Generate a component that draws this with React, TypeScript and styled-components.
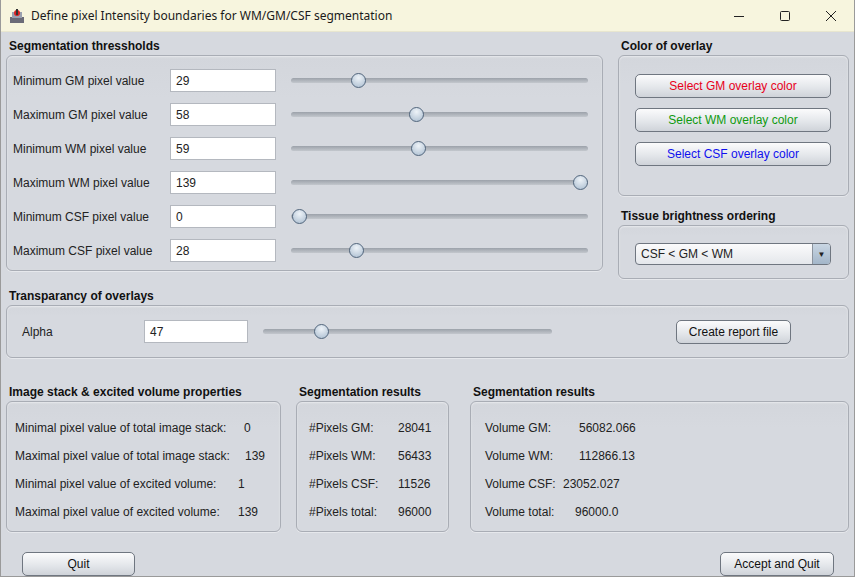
import React from "react";
import styled, { createGlobalStyle } from "styled-components";

const Global = createGlobalStyle`
  html, body { margin: 0; padding: 0; }
  body { width: 855px; height: 577px; overflow: hidden; background: #d6d9df; font-family: "Liberation Sans", Arial, sans-serif; }
`;

const Window = styled.div`
  width: 855px; height: 577px; box-sizing: border-box;
  border: 1px solid #9a9a9a; border-top: none;
  background: #d6d9df; display: flex; flex-direction: column;
`;
const TitleBar = styled.div`
  height: 31px; flex: none; display: flex; align-items: center;
  background: #f7f5de; border-bottom: 1px solid #e8e6cf;
  font-family: "Noto Sans", "Open Sans", sans-serif; font-size: 12px; color: #1a1a1a;
`;
const TitleIcon = styled.svg` margin: 0 6px 0 8px; `;
const TitleText = styled.div` flex: 1; `;
const WinBtn = styled.div`
  width: 46px; height: 31px; display: flex; align-items: center; justify-content: center;
`;
const Content = styled.div`
  flex: 1; display: flex; flex-direction: column; padding: 0 5px 0 5px;
  color: #222; font-size: 12px;
`;
const Row = styled.div<{ $gap?: number }>` display: flex; gap: ${p => p.$gap ?? 0}px; `;
const Section = styled.div<{ $w?: number; $top?: number; $ml?: number }>`
  display: flex; flex-direction: column; ${p => (p.$w ? `width:${p.$w}px;` : "flex:1;")}
  margin-top: ${p => p.$top ?? 6}px; margin-left: ${p => p.$ml ?? 0}px;
`;
const Header = styled.div`
  font-weight: bold; font-size: 12px; height: 17px; line-height: 17px; padding-left: 3px; color: #111;
`;
const Box = styled.div<{ $h: number; $pt?: number; $pl?: number }>`
  height: ${p => p.$h}px; box-sizing: border-box;
  border: 1px solid #a9adb5; border-radius: 6px;
  background: linear-gradient(#d3d6dc, #d6d9df 20%);
  box-shadow: inset 0 1px 2px rgba(255,255,255,0.5), 0 1px 0 rgba(255,255,255,0.4);
  padding: ${p => p.$pt ?? 0}px 0 0 ${p => p.$pl ?? 0}px;
  display: flex; flex-direction: column;
`;
const FieldRow = styled.div`
  display: flex; align-items: center; height: 23px; margin-bottom: 11px;
`;
const Label = styled.div<{ $w: number }>` width: ${p => p.$w}px; flex: none; `;
const Field = styled.div<{ $w: number }>`
  width: ${p => p.$w}px; height: 23px; box-sizing: border-box; flex: none;
  background: #fff; border: 1px solid #b4b8bf; padding: 0 5px;
  display: flex; align-items: center; font-size: 12px;
`;
const Track = styled.div<{ $w: number; $ml: number }>`
  position: relative; width: ${p => p.$w}px; margin-left: ${p => p.$ml}px; height: 5px; flex: none;
  border-radius: 3px; background: linear-gradient(#9ca2aa, #c3c7cd);
`;
const Thumb = styled.div`
  position: absolute; top: -5px; width: 13px; height: 13px; margin-left: -7px; border-radius: 50%;
  border: 1px solid #51657c; background: radial-gradient(circle at 50% 30%, #eef3f8, #a9bccf);
`;
const Btn = styled.div<{ $w: number; $color?: string }>`
  width: ${p => p.$w}px; height: 24px; box-sizing: border-box; flex: none;
  border: 1px solid #6f7680; border-radius: 5px;
  background: linear-gradient(#fbfbfc, #e4e7eb 55%, #cfd3d9);
  display: flex; align-items: center; justify-content: center;
  color: ${p => p.$color ?? "#111"}; font-size: 12px;
`;
const Combo = styled.div`
  width: 196px; height: 22px; box-sizing: border-box; border: 1px solid #6f7680; border-radius: 4px;
  background: linear-gradient(#fbfbfc, #e4e7eb); display: flex; align-items: center;
`;
const ComboText = styled.div` flex: 1; padding-left: 5px; `;
const ComboArrow = styled.div`
  width: 17px; height: 20px; border-left: 1px solid #8c949e; border-radius: 0 3px 3px 0;
  background: linear-gradient(#c9d6e3, #a3b6c9); display: flex; align-items: center; justify-content: center;
  font-size: 8px; color: #222;
`;
const InfoRow = styled.div` display: flex; height: 28px; align-items: center; `;
const Footer = styled.div`
  display: flex; justify-content: space-between; padding: 20px 15px 0 16px;
`;

const Slider = ({ w, ml, v, max }: { w: number; ml: number; v: number; max: number }) => {
  const pos = 8 + (v / max) * (w - 16);
  return (
    <Track $w={w} $ml={ml}>
      <Thumb style={{ left: pos }} />
    </Track>
  );
};

const thresholds: [string, number][] = [
  ["Minimum GM pixel value", 29],
  ["Maximum GM pixel value", 58],
  ["Minimum WM pixel value", 59],
  ["Maximum WM pixel value", 139],
  ["Minimum CSF pixel value", 0],
  ["Maximum CSF pixel value", 28],
];

const info1: [string, string, number][] = [
  ["Minimal pixel value of total image stack:", "0", 229],
  ["Maximal pixel value of total image stack:", "139", 230],
  ["Minimal pixel value of excited volume:", "1", 223],
  ["Maximal pixel value of excited volume:", "139", 223],
];
const info2: [string, string][] = [
  ["#Pixels GM:", "28041"],
  ["#Pixels WM:", "56433"],
  ["#Pixels CSF:", "11526"],
  ["#Pixels total:", "96000"],
];
const info3: [string, string, number][] = [
  ["Volume GM:", "56082.066", 94],
  ["Volume WM:", "112866.13", 94],
  ["Volume CSF:", "23052.027", 78],
  ["Volume total:", "96000.0", 90],
];

export default function App() {
  return (
    <Window>
      <Global />
      <TitleBar>
        <TitleIcon width="16" height="16" viewBox="0 0 16 16">
          <rect x="1" y="9" width="14" height="6" fill="#6b6b78" />
          <rect x="3" y="4" width="10" height="6" fill="#9aa0b0" />
          <circle cx="8" cy="5" r="3" fill="#d22" />
          <rect x="7" y="1" width="2" height="6" fill="#333" />
        </TitleIcon>
        <TitleText>Define pixel Intensity boundaries for WM/GM/CSF segmentation</TitleText>
        <WinBtn>
          <svg width="12" height="12"><line x1="1" y1="6.5" x2="11" y2="6.5" stroke="#222" /></svg>
        </WinBtn>
        <WinBtn>
          <svg width="12" height="12"><rect x="1.5" y="1.5" width="9" height="9" rx="1" fill="none" stroke="#222" /></svg>
        </WinBtn>
        <WinBtn>
          <svg width="12" height="12"><path d="M1 1L11 11M11 1L1 11" stroke="#222" /></svg>
        </WinBtn>
      </TitleBar>
      <Content>
        <Row $gap={15}>
          <Section $w={597}>
            <Header>Segmentation thressholds</Header>
            <Box $h={216} $pt={13} $pl={6}>
              {thresholds.map(([l, v]) => (
                <FieldRow key={l}>
                  <Label $w={157}>{l}</Label>
                  <Field $w={106}>{v}</Field>
                  <Slider w={297} ml={15} v={v} max={139} />
                </FieldRow>
              ))}
            </Box>
          </Section>
          <Section $w={231}>
            <Header>Color of overlay</Header>
            <Box $h={141} $pt={18} $pl={16}>
              <Btn $w={196} $color="#e8001c">Select GM overlay color</Btn>
              <div style={{ height: 10 }} />
              <Btn $w={196} $color="#109a10">Select WM overlay color</Btn>
              <div style={{ height: 10 }} />
              <Btn $w={196} $color="#1010ee">Select CSF overlay color</Btn>
            </Box>
            <Section $top={12}>
              <Header>Tissue brightness ordering</Header>
              <Box $h={54} $pt={17} $pl={16}>
                <Combo>
                  <ComboText>CSF &lt; GM &lt; WM</ComboText>
                  <ComboArrow>▼</ComboArrow>
                </Combo>
              </Box>
            </Section>
          </Section>
        </Row>
        <Section $top={9}>
          <Header>Transparancy of overlays</Header>
          <Box $h={53} $pt={14} $pl={15}>
            <FieldRow>
              <Label $w={122}>Alpha</Label>
              <Field $w={104}>47</Field>
              <Slider w={289} ml={15} v={47} max={255} />
              <div style={{ width: 124 }} />
              <Btn $w={115}>Create report file</Btn>
            </FieldRow>
          </Box>
        </Section>
        <Row>
          <Section $w={275} $top={8}>
            <Header>Image stack &amp; excited volume properties</Header>
            <Box $h={131} $pt={12} $pl={8}>
              {info1.map(([l, v, o]) => (
                <InfoRow key={l}><Label $w={o}>{l}</Label>{v}</InfoRow>
              ))}
            </Box>
          </Section>
          <Section $w={153} $top={8} $ml={15}>
            <Header>Segmentation results</Header>
            <Box $h={131} $pt={12} $pl={12}>
              {info2.map(([l, v]) => (
                <InfoRow key={l}><Label $w={89}>{l}</Label>{v}</InfoRow>
              ))}
            </Box>
          </Section>
          <Section $top={8} $ml={21}>
            <Header>Segmentation results</Header>
            <Box $h={131} $pt={12} $pl={14}>
              {info3.map(([l, v, o]) => (
                <InfoRow key={l}><Label $w={o}>{l}</Label>{v}</InfoRow>
              ))}
            </Box>
          </Section>
        </Row>
        <Footer>
          <Btn $w={113}>Quit</Btn>
          <Btn $w={114}>Accept and Quit</Btn>
        </Footer>
      </Content>
    </Window>
  );
}
